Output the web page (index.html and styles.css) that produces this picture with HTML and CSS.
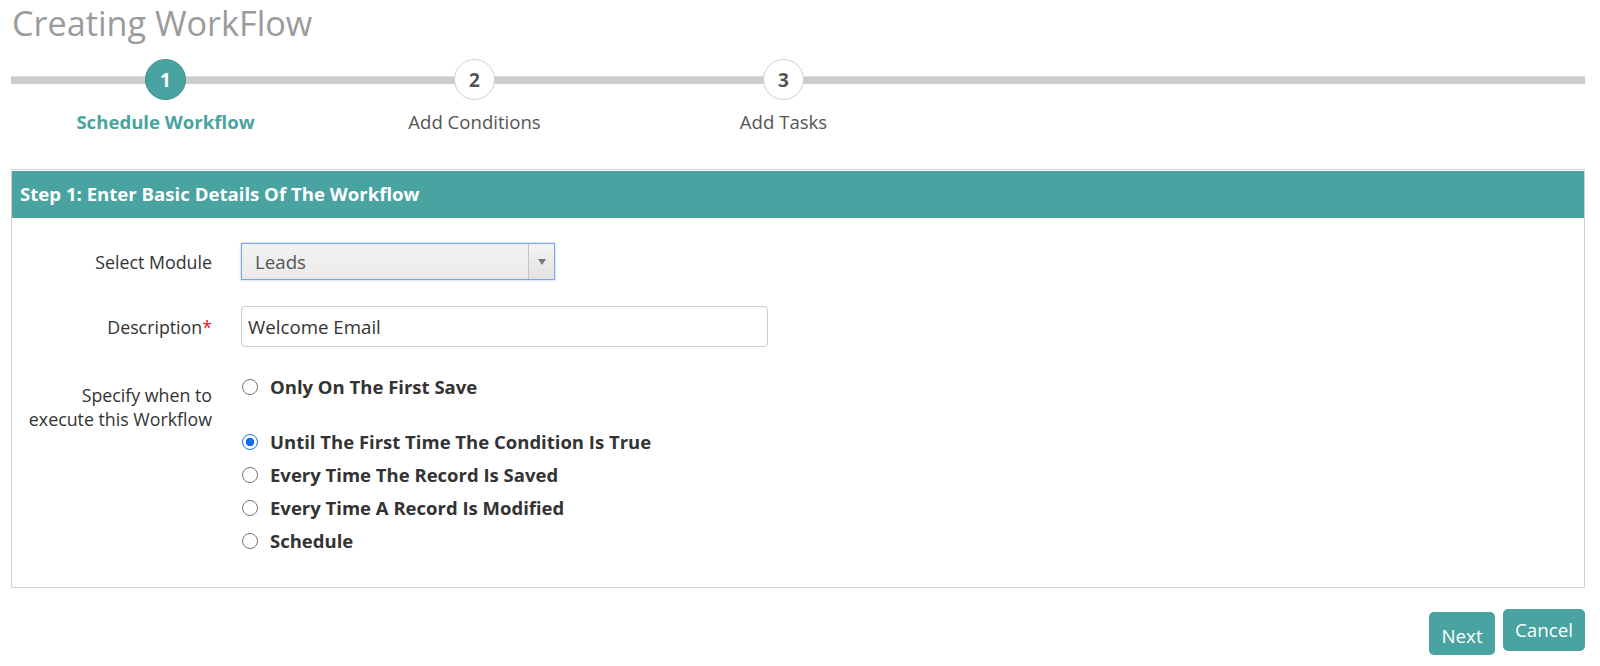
FILE: index.html
```html
<!DOCTYPE html>
<html>
<head>
<meta charset="utf-8">
<link rel="stylesheet" href="styles.css">
</head>
<body>
<div class="page">
  <h1 class="title">Creating WorkFlow</h1>
  <div class="wizard">
    <div class="track"></div>
    <div class="steps">
      <div class="step active"><span class="num">1</span><span class="label">Schedule Workflow</span></div>
      <div class="step"><span class="num">2</span><span class="label">Add Conditions</span></div>
      <div class="step"><span class="num">3</span><span class="label">Add Tasks</span></div>
    </div>
  </div>
  <div class="panel">
    <div class="panel-head">Step 1: Enter Basic Details Of The Workflow</div>
    <div class="panel-body">
      <div class="row">
        <div class="lbl">Select Module</div>
        <div class="select"><span class="sel-text">Leads</span><span class="sel-btn"><span class="tri"></span></span></div>
      </div>
      <div class="row">
        <div class="lbl">Description<span class="req">*</span></div>
        <div class="input">Welcome Email</div>
      </div>
      <div class="row top">
        <div class="lbl multi">Specify when to<br>execute this Workflow</div>
        <div class="radios">
          <div class="radio first"><span class="dot"></span><span>Only On The First Save</span></div>
          <div class="radio"><span class="dot on"></span><span>Until The First Time The Condition Is True</span></div>
          <div class="radio"><span class="dot"></span><span>Every Time The Record Is Saved</span></div>
          <div class="radio"><span class="dot"></span><span>Every Time A Record Is Modified</span></div>
          <div class="radio"><span class="dot"></span><span>Schedule</span></div>
        </div>
      </div>
    </div>
  </div>
  <div class="actions">
    <button class="btn next">Next</button>
    <button class="btn cancel">Cancel</button>
  </div>
</div>
</body>
</html>
```
FILE: styles.css
```css
html, body { margin: 0; padding: 0; background: #fff; }
body { font-family: "Open Sans", "DejaVu Sans", sans-serif; color: #333; }
.page { width: 1574px; padding-left: 11px; }
.title {
  margin: 0; padding: 0 0 0 1px;
  font-size: 34.2px; font-weight: 400; color: #9b9b9b;
  line-height: 45px; height: 45px;
}
.wizard { position: relative; height: 124px; }
.track {
  position: absolute; left: 0; right: 0; top: 31px; height: 8px;
  background: #cccccc; border-top: 1px solid #dedede; box-sizing: border-box;
}
.steps { display: flex; position: relative; }
.step {
  width: 309px; display: flex; flex-direction: column; align-items: center;
  padding-top: 14px;
}
.num {
  width: 41px; height: 41px; border-radius: 50%; box-sizing: border-box;
  border: 1.5px solid #d0d0d0; background: #fff; color: #555;
  display: flex; align-items: center; justify-content: center;
  font-weight: 700; font-size: 19px;
}
.step.active .num { background: #48a3a1; color: #fff; border-color: #3d8f8d; }
.label { margin-top: 9px; font-size: 18.6px; color: #555; line-height: 26px; }
.step.active .label { color: #48a3a1; font-weight: 700; }
.panel { border: 1px solid #d3d3d3; }
.panel-head {
  background: #48a3a1; color: #fff; font-weight: 700; font-size: 18.6px;
  height: 48px; line-height: 46px; padding-left: 8px; box-sizing: border-box;
  border-top: 1px solid #fff;
}
.panel-body { padding: 25px 0 30px; }
.row { display: flex; align-items: center; margin-bottom: 26px; }
.row.top { align-items: flex-start; margin-bottom: 0; }
.lbl { width: 200px; text-align: right; font-size: 17.8px; color: #333; margin-right: 29px; white-space: nowrap; }
.lbl.multi { line-height: 24px; margin-top: 10px; }
.req { color: #e02020; }
.select {
  width: 314px; height: 37px; box-sizing: border-box; display: flex;
  border: 1px solid #7aa7ea; box-shadow: 0 0 2px #9bbff2;
  background: linear-gradient(#f2f2f2, #ebebeb);
}
.sel-text { flex: 1; font-size: 18.7px; color: #555; padding-left: 13px; line-height: 35px; }
.sel-btn {
  width: 25px; border-left: 1px solid #c4c4c4; display: flex;
  align-items: center; justify-content: center;
  background: linear-gradient(#f4f4f4, #e2e2e2);
}
.tri { width: 0; height: 0; border-left: 4.5px solid transparent; border-right: 4.5px solid transparent; border-top: 6px solid #777; }
.input {
  width: 527px; height: 41px; box-sizing: border-box; border: 1px solid #cccccc;
  border-radius: 4px; padding-left: 6px; font-size: 18.7px; color: #333; line-height: 39px;
}
.radios { display: flex; flex-direction: column; margin-top: -3px; }
.radio { display: flex; align-items: center; height: 33px; font-weight: 700; font-size: 18.5px; color: #333; white-space: nowrap; }
.radio.first { margin-bottom: 22px; }
.dot {
  width: 16px; height: 16px; box-sizing: border-box; border-radius: 50%;
  border: 1px solid #767676; background: #fff; margin-right: 12px; margin-left: 1px;
}
.dot.on { border: 1.5px solid #1a73e8; background: radial-gradient(circle, #0b6cf5 0 4px, #fff 4.5px); }
.actions { display: flex; justify-content: flex-end; gap: 8px; padding-top: 21px; align-items: flex-start; }
.btn {
  border: none; background: #48a3a1; color: #fff; font-family: "Open Sans", sans-serif;
  font-size: 18.8px; border-radius: 5px; cursor: pointer; padding: 0;
}
.btn.next { width: 66px; height: 43px; margin-top: 3px; padding-top: 4px; }
.btn.cancel { width: 82px; height: 42px; }
```
